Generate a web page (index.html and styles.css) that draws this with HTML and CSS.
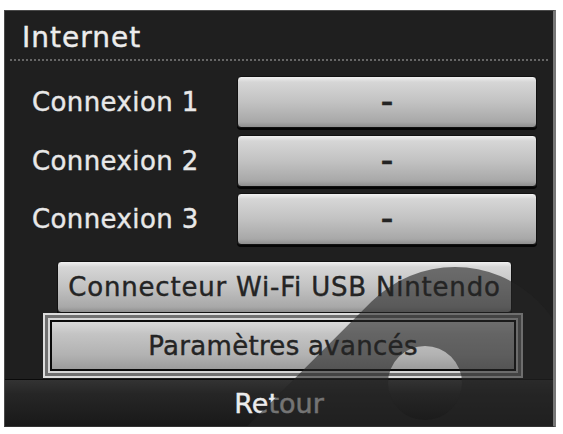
FILE: index.html
```html
<!DOCTYPE html>
<html lang="fr">
<head>
    <meta charset="UTF-8">
    <meta name="viewport" content="width=device-width, initial-scale=1.0">
    <title>Internet</title>
    <link rel="stylesheet" href="styles.css">
</head>
<body>
  <div class="screen">
    <div class="title">Internet</div>
    <div class="dots"></div>

    <!-- Connection slots -->
    <div class="slots">
        <div class="slot"><span class="slot-name">Connexion 1</span><button class="btn slot-btn">–</button></div>
        <div class="slot"><span class="slot-name">Connexion 2</span><button class="btn slot-btn">–</button></div>
        <div class="slot"><span class="slot-name">Connexion 3</span><button class="btn slot-btn">–</button></div>
    </div>

    <button class="btn wide-btn">Connecteur Wi-Fi USB Nintendo</button>

    <div class="selected">
        <div class="selected-inner">
            <button class="btn sel-btn">Paramètres avancés</button>
        </div>
    </div>

    <div class="back-bar">Retour</div>

    <!-- touch cursor drawn over the screen -->
    <svg class="touch" width="548" height="416" viewBox="0 0 548 416">
        <g transform="translate(-5,-11)">
            <path fill="rgba(36,36,36,0.6)" fill-rule="evenodd"
                  d="M371.6,301.6 A118,118 0 0,1 538.4,301.6 A118,118 0 0,1 538.4,468.4 L238.4,768.4 L71.6,601.6 Z
                     M388,383 a37,37 0 1,0 74,0 a37,37 0 1,0 -74,0 Z"/>
        </g>
    </svg>
  </div>
</body>
</html>
```

FILE: styles.css
```css
body {
    margin: 0;
    background-color: #fff;
    font-family: "DejaVu Sans", sans-serif;
}
.screen {
    position: relative;
    box-sizing: border-box;
    width: 552px;
    height: 417px;
    margin: 10px 0 0 4px;
    background-color: #1f1f1f;
    border: 1px solid #4a4a4a;
    border-right: 3px solid #777;
    border-bottom-color: #333;
    overflow: hidden;
    display: flex;
    flex-direction: column;
}
.title {
    height: 38px;
    padding: 10px 0 0 17px;
    font-size: 28px;
    line-height: 34px;
    letter-spacing: 1px;
    color: #ececec;
    -webkit-text-stroke: 0.4px #ececec;
}
.dots {
    height: 2px;
    margin: 0 5px;
    background-image: repeating-linear-gradient(to right, #666 0 2px, transparent 2px 4px);
}
.slots {
    padding-top: 15px;
    display: flex;
    flex-direction: column;
    gap: 6.5px;
}
.slot {
    display: flex;
    align-items: center;
}
.slot-name {
    width: 205px;
    padding-left: 27px;
    font-size: 26px;
    letter-spacing: 0.4px;
    color: #e8e8e8;
    -webkit-text-stroke: 0.4px #e8e8e8;
}
.btn {
    display: block;
    box-sizing: border-box;
    padding: 0;
    border: 1px solid #111;
    border-radius: 4px;
    background: linear-gradient(to bottom, #f0f0f0 0%, #d6d6d6 10%, #c2c2c2 50%, #a8a8a8 90%, #8e8e8e 100%);
    box-shadow: 0 2px 0 #050505;
    font-family: "DejaVu Sans", sans-serif;
    font-size: 26px;
    color: #242424;
    -webkit-text-stroke: 0.4px #242424;
}
.slot-btn {
    width: 300px;
    height: 52px;
    font-weight: bold;
    font-size: 24px;
}
.wide-btn {
    width: 455px;
    height: 52px;
    margin: 16px 0 0 52px;
    letter-spacing: 0.8px;
}
.selected {
    box-sizing: border-box;
    width: 480px;
    height: 65px;
    margin-left: 38px;
    border: 2px solid #dcdcdc;
    padding: 3px;
    background-color: #707070;
}
.selected-inner {
    height: 100%;
    box-sizing: border-box;
    border: 2px solid #d6d6d6;
}
.sel-btn {
    width: 100%;
    height: 100%;
    border: 2px solid #0a0a0a;
    border-radius: 0;
    box-shadow: none;
    background: linear-gradient(to bottom, #dadada 0%, #c4c4c4 25%, #b2b2b2 70%, #9c9c9c 100%);
    letter-spacing: 0.3px;
}
.back-bar {
    margin-top: auto;
    height: 39px;
    padding-top: 7px;
    border-top: 1px solid #0a0a0a;
    background: linear-gradient(to bottom, #333 0%, #262626 30%, #191919 100%);
    text-align: center;
    font-size: 27px;
    line-height: 34px;
    color: #ececec;
    -webkit-text-stroke: 0.4px #ececec;
}
.touch {
    position: absolute;
    left: 0;
    top: 0;
    pointer-events: none;
}
```
